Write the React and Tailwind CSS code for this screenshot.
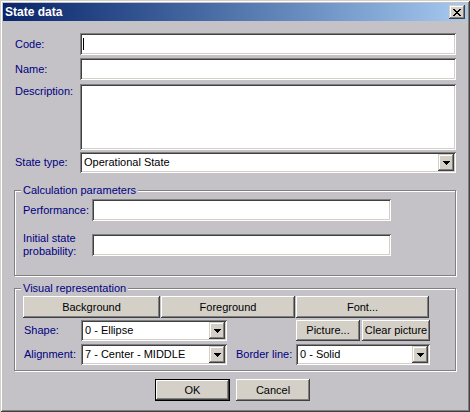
import React from "react";

const SUNKEN =
  "bg-white shadow-[inset_1px_1px_0_#808080,inset_-1px_-1px_0_#ffffff,inset_2px_2px_0_#404040,inset_-2px_-2px_0_#d4d0c8]";
const RAISED =
  "bg-[#d4d0c8] shadow-[inset_-1px_-1px_0_#404040,inset_1px_1px_0_#ffffff,inset_-2px_-2px_0_#808080,inset_2px_2px_0_#d4d0c8]";
const ARROWBTN =
  "bg-[#d4d0c8] shadow-[inset_-1px_-1px_0_#404040,inset_1px_1px_0_#d4d0c8,inset_-2px_-2px_0_#808080,inset_2px_2px_0_#ffffff]";

function Arrow() {
  return (
    <svg width="7" height="4" viewBox="0 0 7 4" shapeRendering="crispEdges">
      <rect x="0" y="0" width="7" height="1" fill="#000" />
      <rect x="1" y="1" width="5" height="1" fill="#000" />
      <rect x="2" y="2" width="3" height="1" fill="#000" />
      <rect x="3" y="3" width="1" height="1" fill="#000" />
    </svg>
  );
}

function CloseX() {
  const rows = [
    [0, 6],
    [1, 5],
    [2, 4],
    [3, 3],
    [2, 4],
    [1, 5],
    [0, 6],
  ];
  return (
    <svg width="8" height="7" viewBox="0 0 8 7" shapeRendering="crispEdges">
      {rows.map(([a, b], i) =>
        a === b ? (
          <rect key={i} x={a} y={i} width="2" height="1" fill="#000" />
        ) : (
          <g key={i}>
            <rect x={a} y={i} width="2" height="1" fill="#000" />
            <rect x={b} y={i} width="2" height="1" fill="#000" />
          </g>
        )
      )}
    </svg>
  );
}

function Select({ text, className = "" }) {
  return (
    <div className={`${SUNKEN} h-[21px] flex items-stretch p-[2px] ${className}`}>
      <div className="flex-1 flex items-center pl-[2px] text-black whitespace-nowrap overflow-hidden">
        {text}
      </div>
      <div className={`${ARROWBTN} w-[16px] flex items-center justify-center`}>
        <Arrow />
      </div>
    </div>
  );
}

function Button({ children, className = "" }) {
  return (
    <div className={`${RAISED} flex items-center justify-center text-black whitespace-nowrap ${className}`}>
      {children}
    </div>
  );
}

function Group({ title, children, className = "" }) {
  return (
    <div
      className={`relative border border-[#808080] shadow-[inset_1px_1px_0_#ffffff,1px_1px_0_#ffffff] ${className}`}
    >
      <span className="absolute left-[6px] -top-[7px] px-[2px] leading-[13px] bg-[#c4c2c7] text-[#000080]">
        {title}
      </span>
      {children}
    </div>
  );
}

export default function App() {
  return (
    <div className="w-[470px] h-[412px] bg-[#c4c2c7] p-[3px] flex flex-col font-['Liberation_Sans',Arial,sans-serif] text-[11px] leading-[13px] shadow-[inset_1px_1px_0_#d4d0c8,inset_-1px_-1px_0_#404040,inset_2px_2px_0_#ffffff,inset_-2px_-2px_0_#808080]">
      {/* Title bar */}
      <div className="h-[18px] flex items-center justify-between pl-[2px] pr-[2px] bg-linear-to-r from-[#0a246a] to-[#a6caf0]">
        <span className="text-white font-bold text-[12px] leading-[14px]">State data</span>
        <div className={`${ARROWBTN} w-[16px] h-[14px] flex items-center justify-center`}>
          <CloseX />
        </div>
      </div>

      {/* Body */}
      <div className="flex flex-col pt-[12px] pl-[11px] pr-[11px]">
        <div className="flex items-center pl-[1px] h-[22px]">
          <span className="w-[65px] text-[#000080]">Code:</span>
          <div className={`${SUNKEN} flex-1 h-[22px] flex items-center pl-[3px]`}>
            <span className="w-px h-[12px] bg-black" />
          </div>
        </div>
        <div className="flex items-center pl-[1px] mt-[3px]">
          <span className="w-[65px] text-[#000080]">Name:</span>
          <div className={`${SUNKEN} flex-1 h-[22px]`} />
        </div>
        <div className="flex items-start pl-[1px] mt-[4px]">
          <span className="w-[65px] text-[#000080] pt-[1px]">Description:</span>
          <div className={`${SUNKEN} flex-1 h-[66px]`} />
        </div>
        <div className="flex items-center pl-[1px] mt-[2px]">
          <span className="w-[65px] text-[#000080]">State type:</span>
          <Select text="Operational State" className="flex-1" />
        </div>

        <Group title="Calculation parameters" className="mt-[17px] pt-[8px] pb-[17px] pl-[8px]">
          <div className="flex items-center">
            <span className="w-[69px] text-[#000080]">Performance:</span>
            <div className={`${SUNKEN} w-[299px] h-[22px]`} />
          </div>
          <div className="flex items-center mt-[11px]">
            <span className="w-[69px] text-[#000080]">
              Initial state
              <br />
              probability:
            </span>
            <div className={`${SUNKEN} w-[299px] h-[22px]`} />
          </div>
        </Group>

        <Group title="Visual representation" className="mt-[12px] pt-[7px] pb-[5px] pl-[8px]">
          <div className="flex gap-[1px]">
            <Button className="w-[137px] h-[22px]">Background</Button>
            <Button className="w-[134px] h-[22px]">Foreground</Button>
            <Button className="w-[133px] h-[22px]">Font...</Button>
          </div>
          <div className="flex items-center mt-[2px]">
            <span className="w-[58px] pl-[1px] text-[#000080]">Shape:</span>
            <Select text="0 - Ellipse" className="w-[146px]" />
            <div className="w-[69px]" />
            <Button className="w-[64px] h-[21px]">Picture...</Button>
            <Button className="w-[68px] h-[21px] ml-[2px]">Clear picture</Button>
          </div>
          <div className="flex items-center mt-[3px]">
            <span className="w-[58px] pl-[1px] text-[#000080]">Alignment:</span>
            <Select text="7 - Center - MIDDLE" className="w-[146px]" />
            <span className="w-[60px] ml-[9px] text-[#000080]">Border line:</span>
            <Select text="0 - Solid" className="w-[134px]" />
          </div>
        </Group>

        <div className="flex mt-[8px] pl-[141px] gap-[6px]">
          <div className="w-[75px] h-[22px] border border-black flex">
            <Button className="flex-1">OK</Button>
          </div>
          <Button className="w-[74px] h-[22px]">Cancel</Button>
        </div>
      </div>
    </div>
  );
}
